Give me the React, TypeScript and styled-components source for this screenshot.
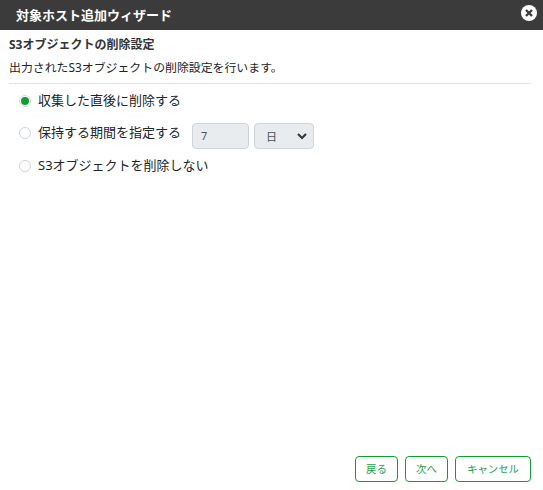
import React from "react";
import styled, { createGlobalStyle } from "styled-components";

const Global = createGlobalStyle`
  html, body { margin: 0; padding: 0; background: #fff; }
  body { font-family: "Noto Sans", "Noto Sans CJK JP", sans-serif; color: #212529; }
`;
const Dialog = styled.div`
  width: 543px; height: 490px; display: flex; flex-direction: column; box-sizing: border-box;
`;
const TitleBar = styled.header`
  height: 30px; background: #3b3b3b; display: flex; align-items: center; justify-content: space-between;
  padding: 0 5px 0 16px; flex: none;
`;
const Title = styled.h1`
  margin: 0; font-size: 13px; font-weight: 700; color: #fff; line-height: 30px;
`;
const CloseIcon = styled.svg`
  width: 18px; height: 18px; display: block; margin-top: -4px;
`;
const Body = styled.main`
  flex: 1; padding: 7px 12px 0 9px; display: flex; flex-direction: column;
`;
const Heading = styled.h2`
  margin: 0; font-size: 12px; font-weight: 700; line-height: 16px; color: #333;
`;
const Description = styled.p`
  margin: 6px 0 0; font-size: 11.9px; line-height: 16px; color: #212529;
  padding-bottom: 8px; border-bottom: 1px solid #dee2e6;
`;
const Options = styled.div`
  display: flex; flex-direction: column; padding: 7px 0 0 10px;
`;
const Row = styled.label<{ $h: number }>`
  display: flex; align-items: center; height: ${p => p.$h}px; font-size: 13px; color: #212529;
`;
const Radio = styled.span<{ $on?: boolean }>`
  width: 12px; height: 12px; border-radius: 50%; box-sizing: border-box; flex: none; margin-right: 7px;
  border: 1px solid ${p => (p.$on ? "#d5d8db" : "#ced4da")}; background: #fff;
  display: flex; align-items: center; justify-content: center;
  &::after { content: ""; display: ${p => (p.$on ? "block" : "none")}; width: 8px; height: 8px; border-radius: 50%; background: #0ea02e; }
`;
const Label = styled.span<{ $up?: number }>`
  line-height: 16px; margin-top: ${p => -(p.$up ?? 0)}px;
`;
const NumberBox = styled.div`
  width: 57px; height: 26px; box-sizing: border-box; margin: 6px 0 0 11px; padding-left: 8px;
  background: #e9ecef; border: 1px solid #ced4da; border-radius: 4px;
  font-size: 11px; line-height: 24px; color: #495057;
`;
const SelectBox = styled.div`
  width: 60px; height: 26px; box-sizing: border-box; margin: 6px 0 0 5px; padding: 0 5px 0 11px;
  background: #e9ecef; border: 1px solid #ced4da; border-radius: 4px;
  display: flex; align-items: center; justify-content: space-between;
  font-size: 11px; color: #495057;
`;
const Chevron = styled.svg`
  width: 12px; height: 12px; display: block;
`;
const Footer = styled.footer`
  display: flex; justify-content: flex-end; gap: 7px; padding: 0 12px 8px 0;
`;
const Btn = styled.button<{ $w: number }>`
  width: ${p => p.$w}px; height: 26px; box-sizing: border-box; padding: 0; background: #fff;
  border: 1px solid #0ea02e; border-radius: 4px; color: #2a9d4a;
  font: 400 10.4px/24px "Noto Sans", "Noto Sans CJK JP", sans-serif;
`;

export default function App() {
  return (
    <Dialog>
      <Global />
      <TitleBar>
        <Title>対象ホスト追加ウィザード</Title>
        <CloseIcon viewBox="0 0 18 18">
          <circle cx="9" cy="9" r="8" fill="#fff" />
          <path d="M6 6l6 6M12 6l-6 6" stroke="#3b3b3b" strokeWidth="2.4" fill="none" />
        </CloseIcon>
      </TitleBar>
      <Body>
        <Heading>S3オブジェクトの削除設定</Heading>
        <Description>出力されたS3オブジェクトの削除設定を行います。</Description>
        <Options>
          <Row $h={20}>
            <Radio $on />
            <Label $up={2}>収集した直後に削除する</Label>
          </Row>
          <Row $h={44}>
            <Radio />
            <Label $up={2}>保持する期間を指定する</Label>
            <NumberBox>7</NumberBox>
            <SelectBox>
              日
              <Chevron viewBox="0 0 12 12">
                <path d="M2 4l4 4 4-4" stroke="#343a40" strokeWidth="2.2" fill="none" />
              </Chevron>
            </SelectBox>
          </Row>
          <Row $h={21}>
            <Radio />
            <Label $up={2}>S3オブジェクトを削除しない</Label>
          </Row>
        </Options>
      </Body>
      <Footer>
        <Btn $w={43}>戻る</Btn>
        <Btn $w={43}>次へ</Btn>
        <Btn $w={76}>キャンセル</Btn>
      </Footer>
    </Dialog>
  );
}
